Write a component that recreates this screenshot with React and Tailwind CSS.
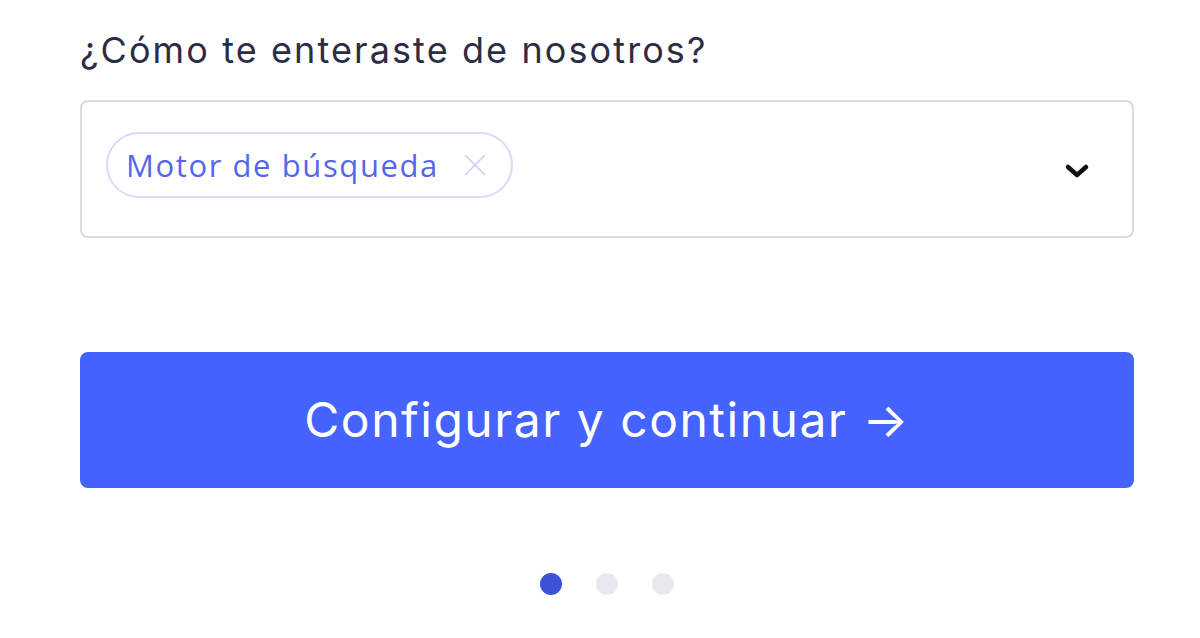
import React from 'react';
import { X } from 'lucide-react';

const App = () => {
  return (
    <div className="min-h-screen w-[1200px] h-[638px] bg-white overflow-hidden font-['Inter',sans-serif]">
      <div className="ml-[80px] w-[1054px] pt-[28px]">
        <label className="block text-[36px] leading-[44px] text-[#2b2d45] tracking-[2.1px]">
          ¿Cómo te enteraste de nosotros?
        </label>

        <div className="mt-[28px] h-[138px] border-2 border-[#d9dbe3] rounded-[8px] flex items-start justify-between pl-[24px] pr-[42px] pt-[30px]">
          <span className="h-[66px] flex items-center gap-[17px] pl-[18px] pr-[17px] border-2 border-[#d6dcfb] rounded-full text-[#5467ec] text-[31px] tracking-[1.6px] font-['Open_Sans',sans-serif]">
            Motor de búsqueda
            <X className="w-[38px] h-[38px] text-[#c9d0f7]" strokeWidth={1.1} />
          </span>
          <svg className="mt-[30px] w-[26px] h-[18px]" viewBox="0 0 26 18" fill="none">
            <path d="M4 5 L13 13 L22 5" stroke="#111" strokeWidth="4.5" strokeLinecap="round" strokeLinejoin="round" />
          </svg>
        </div>

        <button className="mt-[114px] w-full h-[136px] bg-[#4563ff] rounded-[8px] text-white text-[48px] tracking-[1.5px]">
          Configurar y continuar →
        </button>

        <div className="mt-[85px] flex justify-center gap-[34px]">
          <span className="w-[22px] h-[22px] rounded-full bg-[#3b52d9]" />
          <span className="w-[22px] h-[22px] rounded-full bg-[#e8e8ee]" />
          <span className="w-[22px] h-[22px] rounded-full bg-[#e8e8ee]" />
        </div>
      </div>
    </div>
  );
};

export default App;
